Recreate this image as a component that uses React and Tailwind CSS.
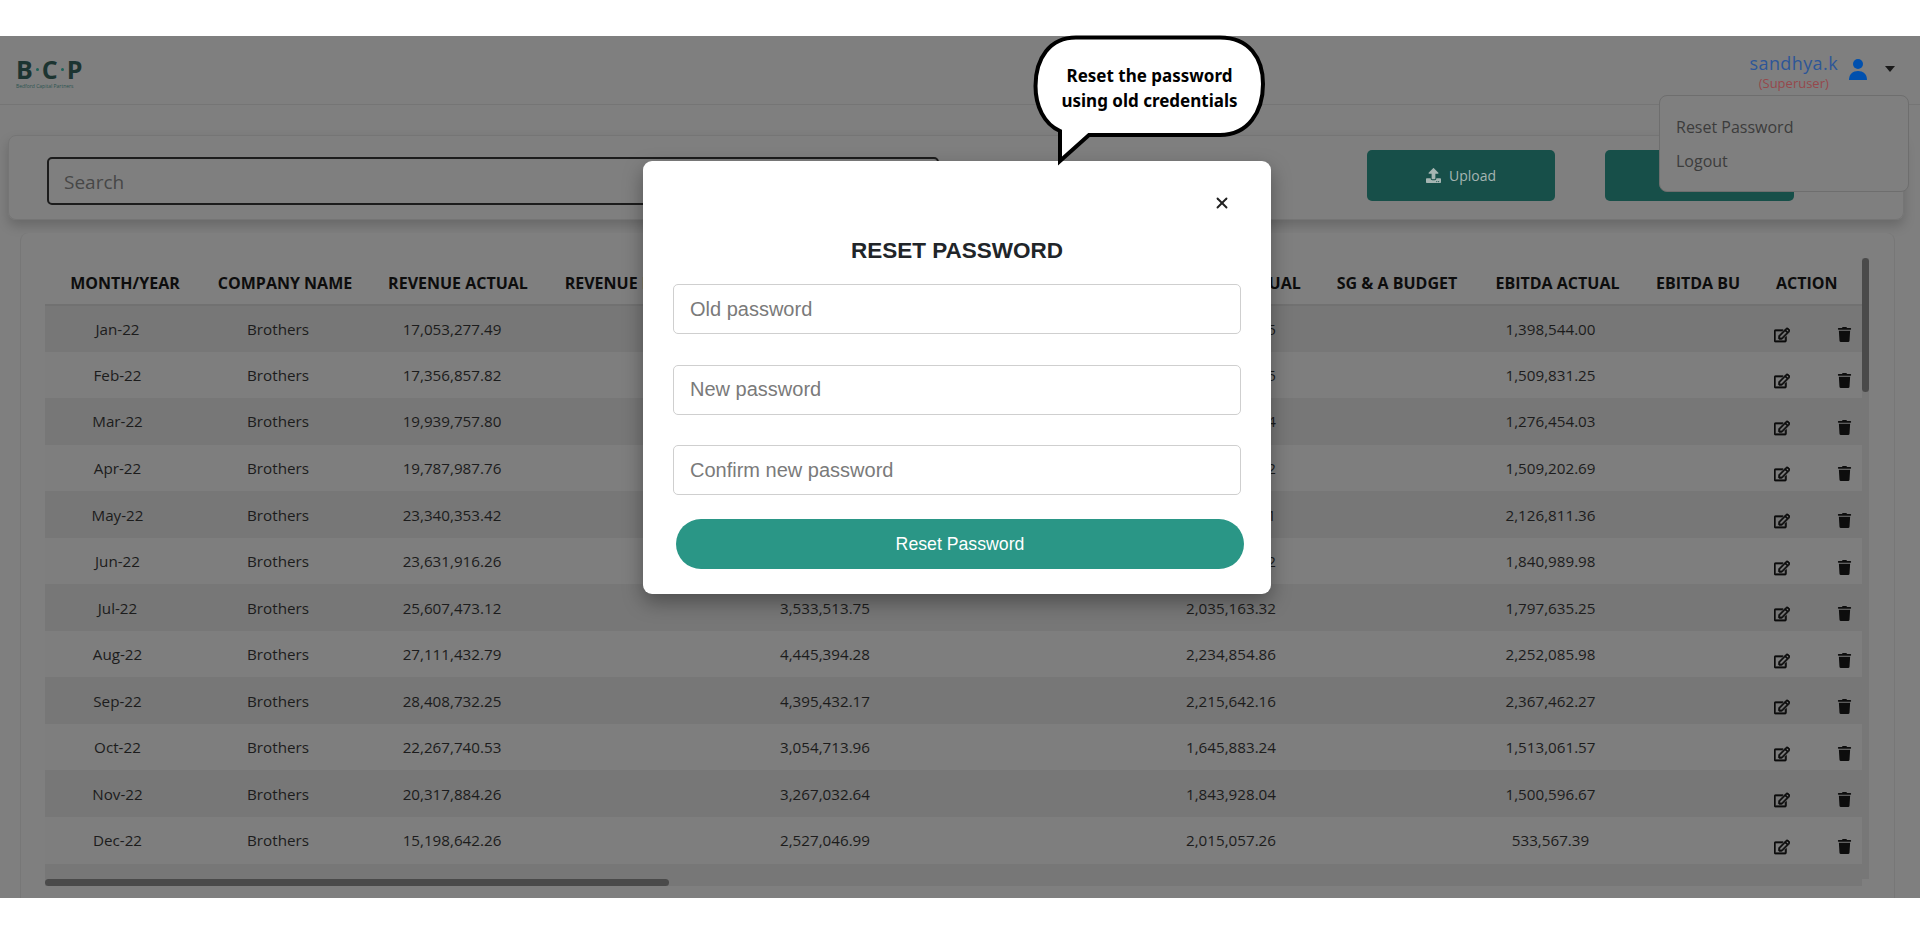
import React from 'react';
import { X } from 'lucide-react';
import { FaUpload, FaRegEdit, FaTrash } from 'react-icons/fa';

const rows = [
  ['Jan-22', '17,053,277.49', '2,914,380.12', '1,987,402.15', '1,398,544.00'],
  ['Feb-22', '17,356,857.82', '3,021,447.36', '1,902,118.75', '1,509,831.25'],
  ['Mar-22', '19,939,757.80', '3,118,205.41', '2,104,550.64', '1,276,454.03'],
  ['Apr-22', '19,787,987.76', '3,240,118.09', '2,011,736.82', '1,509,202.69'],
  ['May-22', '23,340,353.42', '3,602,771.50', '2,088,214.31', '2,126,811.36'],
  ['Jun-22', '23,631,916.26', '3,411,090.87', '1,994,603.22', '1,840,989.98'],
  ['Jul-22', '25,607,473.12', '3,533,513.75', '2,035,163.32', '1,797,635.25'],
  ['Aug-22', '27,111,432.79', '4,445,394.28', '2,234,854.86', '2,252,085.98'],
  ['Sep-22', '28,408,732.25', '4,395,432.17', '2,215,642.16', '2,367,462.27'],
  ['Oct-22', '22,267,740.53', '3,054,713.96', '1,645,883.24', '1,513,061.57'],
  ['Nov-22', '20,317,884.26', '3,267,032.64', '1,843,928.04', '1,500,596.67'],
  ['Dec-22', '15,198,642.26', '2,527,046.99', '2,015,057.26', '533,567.39'],
];

const Field = ({ placeholder }) => (
  <input
    placeholder={placeholder}
    className="block w-[568px] h-[50px] ml-[30px] px-4 bg-white border border-[#cfcfcf] rounded-[5px] text-[20px] placeholder:text-[#7a7a7a] outline-none"
  />
);

function Table() {
  return (
    <div className="relative h-[653px] ml-[24px] mr-[32px] pt-[27px] overflow-hidden">
      <table className="table-fixed w-[1817px] border-collapse text-[15.2px] text-[#1c1c1c]">
        <colgroup>
          <col className="w-[155px]" />
          <col className="w-[170px]" />
          <col className="w-[176px]" />
          <col className="w-[186px]" />
          <col className="w-[200px]" />
          <col className="w-[234px]" />
          <col className="w-[151px]" />
          <col className="w-[160px]" />
          <col className="w-[161px]" />
          <col className="w-[120px]" />
          <col className="w-[104px]" />
        </colgroup>
        <thead>
          <tr className="h-[45px] border-b-2 border-[#717171] text-[#0d0d0d] text-[16px]">
            <th className="font-bold whitespace-nowrap pl-[5px] pt-[2px]">MONTH/YEAR</th>
            <th className="font-bold whitespace-nowrap pt-[2px]">COMPANY NAME</th>
            <th className="font-bold whitespace-nowrap pt-[2px]">REVENUE ACTUAL</th>
            <th className="font-bold whitespace-nowrap pr-[7px] pt-[2px]">REVENUE BUDGET</th>
            <th />
            <th />
            <th className="font-bold whitespace-nowrap pt-[2px]">SG &amp; A ACTUAL</th>
            <th className="font-bold whitespace-nowrap pt-[2px]">SG &amp; A BUDGET</th>
            <th className="font-bold whitespace-nowrap pt-[2px]">EBITDA ACTUAL</th>
            <th className="font-bold text-left pl-[18px] whitespace-nowrap pt-[2px]">EBITDA BU</th>
            <th className="font-bold text-left pl-[18px] pt-[2px]">ACTION</th>
          </tr>
        </thead>
        <tbody>
          {rows.map((r, i) => (
            <tr key={r[0]} className={i % 2 === 0 ? 'h-[46.55px] bg-[#777777]' : 'h-[46.55px] bg-[#7e7e7e]'}>
              <td className="text-center pr-[10px] pt-[1px]">{r[0]}</td>
              <td className="text-center pr-[14px] pt-[1px]">Brothers</td>
              <td className="text-center pr-[12px] pt-[1px]">{r[1]}</td>
              <td />
              <td className="text-center pr-[14px] pt-[1px]">{r[2]}</td>
              <td />
              <td className="text-center pr-[21px] pt-[1px]">{r[3]}</td>
              <td />
              <td className="text-center pr-[14px] pt-[1px]">{r[4]}</td>
              <td />
              <td>
                <div className="flex justify-between pl-[16px] pr-[10px] pt-[13px] text-[#0d0d0d]">
                  <FaRegEdit size={16} stroke="currentColor" strokeWidth={24} />
                  <FaTrash size={15} />
                </div>
              </td>
            </tr>
          ))}
          <tr className="h-[46.55px] bg-[#777777]"><td colSpan={11} /></tr>
        </tbody>
      </table>
      <div className="absolute left-0 top-[646px] w-[624px] h-[7px] rounded bg-[#4a4a4a]" />
    </div>
  );
}

export default function App() {
  return (
    <div className="relative w-[1920px] h-[942px] bg-white overflow-hidden font-['Open_Sans',sans-serif]">
      <div className="h-[36px]" />
      <div className="h-[862px] bg-[#7f7f7f] flex flex-col overflow-hidden">
        <header className="h-[69px] shrink-0 border-b border-[#757575] flex justify-between pl-4 pr-[25px]">
          <div className="pt-[19px] text-[#1c3431]">
            <div className="flex items-center gap-[3px] text-[25px] leading-[28px] font-bold">
              <span>B</span>
              <span className="w-[3px] h-[3px] rounded-full bg-[#1d6259]" />
              <span>C</span>
              <span className="w-[3px] h-[3px] rounded-full bg-[#1d6259]" />
              <span>P</span>
            </div>
            <div className="text-[5px] leading-[6px] text-[#2c5450] whitespace-nowrap">Bedford Capital Partners</div>
          </div>
          <div className="flex items-start pt-[14px]">
            <div className="flex flex-col items-center">
              <span className="text-[18px] leading-[26px] text-[#2d5698] tracking-[0.4px]">sandhya.k</span>
              <span className="text-[13px] leading-[14px] text-[#96484c]">(Superuser)</span>
            </div>
            <svg viewBox="0 0 20 21" className="w-[20px] h-[21px] ml-[10px] mt-[9px] text-[#0050ae]" fill="currentColor">
              <circle cx="10" cy="5" r="5" />
              <path d="M1 21c0-6 4-9 9-9s9 3 9 9z" />
            </svg>
            <div className="ml-[17px] mt-[16px] w-0 h-0 border-x-[5.5px] border-x-transparent border-t-[6px] border-t-[#1a1a1a]" />
          </div>
        </header>

        <section className="mt-[30px] ml-[8px] mr-[16px] h-[85px] shrink-0 rounded-[8px] border border-[#757575] shadow-[0_6px_12px_rgba(0,0,0,0.18)] flex items-start pl-[38px]">
          <div className="mt-[21px] w-[892px] h-[48px] border-2 border-[#1c1c1c] rounded-[5px] flex items-center pl-[15px] pt-[2px] text-[19px] text-[#474747]">Search</div>
          <div className="mt-[14px] ml-[428px] w-[188px] h-[51px] rounded-[5px] bg-[#174f49] flex items-center justify-center gap-[8px] text-[14px] text-[#a5b5b2]">
            <FaUpload size={15} />
            Upload
          </div>
          <div className="mt-[14px] ml-[50px] w-[189px] h-[51px] rounded-[5px] bg-[#174f49]" />
        </section>

        <section className="relative mt-[13px] ml-[20px] mr-[25px] flex-1 rounded-t-[8px] bg-[#7f7f7f] border-r border-l border-[#777777]">
          <Table />
          <div className="absolute top-[25px] left-[1841px] w-[7px] h-[621px] bg-[#777777]" />
          <div className="absolute top-[25px] left-[1841px] w-[7px] h-[134px] rounded bg-[#4a4a4a]" />
        </section>
      </div>

      {/* user menu */}
      <div className="absolute left-[1659px] top-[95px] w-[250px] h-[97px] bg-[#7f7f7f] border border-[#6e6e6e] rounded-[8px] pl-[16px] pt-[14px] text-[16px] leading-[34px] text-[#3c3c3c]">
        <div>Reset Password</div>
        <div>Logout</div>
      </div>

      {/* modal */}
      <div className="absolute left-[643px] top-[161px] w-[628px] h-[433px] bg-white rounded-[9px] shadow-[0_8px_20px_rgba(0,0,0,0.35)] font-['Liberation_Sans',sans-serif]">
        <div className="flex justify-end pt-[33px] pr-[40px] text-[#222]"><X size={18} strokeWidth={2.5} /></div>
        <h2 className="mt-[24px] text-center text-[22.5px] leading-[30px] font-bold text-[#212529]">RESET PASSWORD</h2>
        <div className="mt-[18px] flex flex-col gap-[30.5px]">
          <Field placeholder="Old password" />
          <Field placeholder="New password" />
          <Field placeholder="Confirm new password" />
        </div>
        <button className="block mt-[24px] ml-[33px] w-[568px] h-[50px] rounded-full bg-[#2a9686] text-white text-[17.7px]">Reset Password</button>
      </div>

      {/* speech bubble */}
      <div className="absolute left-[1030px] top-[34px] w-[240px] h-[132px]">
        <svg viewBox="0 0 240 132" className="absolute inset-0 w-full h-full">
          <path d="M46 3.5H190C219 3.5 233 24 233 50C233 78 218 101 190 101H59L30 127V97C14 90 5.5 72 5.5 52C5.5 24 20 3.5 46 3.5Z" fill="#fff" stroke="#000" strokeWidth="4" strokeLinejoin="miter" />
        </svg>
        <div className="relative pt-[30px] text-center text-[17px] leading-[24.5px] font-bold text-black font-['Noto_Sans',sans-serif] pr-[1px]">
          Reset the password<br />using old credentials
        </div>
      </div>
    </div>
  );
}
